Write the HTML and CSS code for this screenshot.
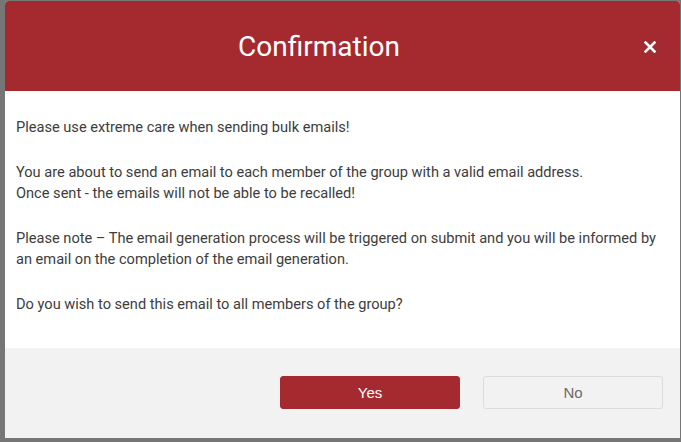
FILE: index.html
```html
<!DOCTYPE html>
<html lang="en">
<head>
<meta charset="utf-8">
<title>Confirmation</title>
<link rel="stylesheet" href="styles.css">
</head>
<body>
<div class="backdrop">
  <div class="modal">
    <div class="modal-header">
      <h1 class="modal-title">Confirmation</h1>
      <button class="close" type="button" aria-label="Close">
        <svg width="12" height="12" viewBox="0 0 12 12"><path d="M1.5 1.5 L10.5 10.5 M10.5 1.5 L1.5 10.5" stroke="#fff" stroke-width="2.6" stroke-linecap="square"/></svg>
      </button>
    </div>
    <div class="modal-body">
      <p>Please use extreme care when sending bulk emails!</p>
      <p>You are about to send an email to each member of the group with a valid email address.<br>Once sent - the emails will not be able to be recalled!</p>
      <p>Please note – The email generation process will be triggered on submit and you will be informed by an email on the completion of the email generation.</p>
      <p>Do you wish to send this email to all members of the group?</p>
    </div>
    <div class="modal-footer">
      <button class="btn btn-yes" type="button">Yes</button>
      <button class="btn btn-no" type="button">No</button>
    </div>
  </div>
</div>
</body>
</html>
```
FILE: styles.css
```css
html, body {
  margin: 0;
  padding: 0;
  height: 100%;
  overflow: hidden;
}
body {
  background: #767676;
  font-family: Roboto, "Liberation Sans", Arial, sans-serif;
}
.backdrop {
  padding: 1px 1px 0 5px;
}
.modal {
  width: 675px;
  height: 437px;
  display: flex;
  flex-direction: column;
  background: #fff;
  border-radius: 4px 4px 0 0;
  overflow: hidden;
}
.modal-header {
  height: 90px;
  flex: none;
  background: #a52a30;
  display: flex;
  align-items: center;
  justify-content: center;
  padding-right: 47px;
  position: relative;
}
.modal-title {
  margin: 0;
  font-weight: 400;
  font-size: 28px;
  color: #fff;
  font-family: Roboto, "Liberation Sans", sans-serif;
}
.close {
  position: absolute;
  right: 23px;
  top: 39px;
  width: 14px;
  height: 14px;
  padding: 1px;
  border: 0;
  background: transparent;
  display: flex;
  align-items: center;
  justify-content: center;
}
.modal-body {
  flex: 1;
  padding: 26px 11px 0 11px;
  color: #3d3d3d;
  font-size: 14.6px;
  line-height: 21px;
}
.modal-body p {
  margin: 0 0 24px 0;
}
.modal-footer {
  height: 90px;
  flex: none;
  background: #f2f2f2;
  display: flex;
  justify-content: flex-end;
  align-items: flex-start;
  gap: 23px;
  padding: 28px 17px 0 0;
  box-sizing: border-box;
}
.btn {
  width: 180px;
  height: 33px;
  border-radius: 3px;
  font-family: "Liberation Sans", Arial, sans-serif;
  font-size: 15px;
  cursor: pointer;
}
.btn-yes {
  background: #a52a30;
  border: 1px solid #a52a30;
  color: #fff;
}
.btn-no {
  background: #f2f2f2;
  border: 1px solid #dcdcdc;
  color: #6a6a6a;
}
```
